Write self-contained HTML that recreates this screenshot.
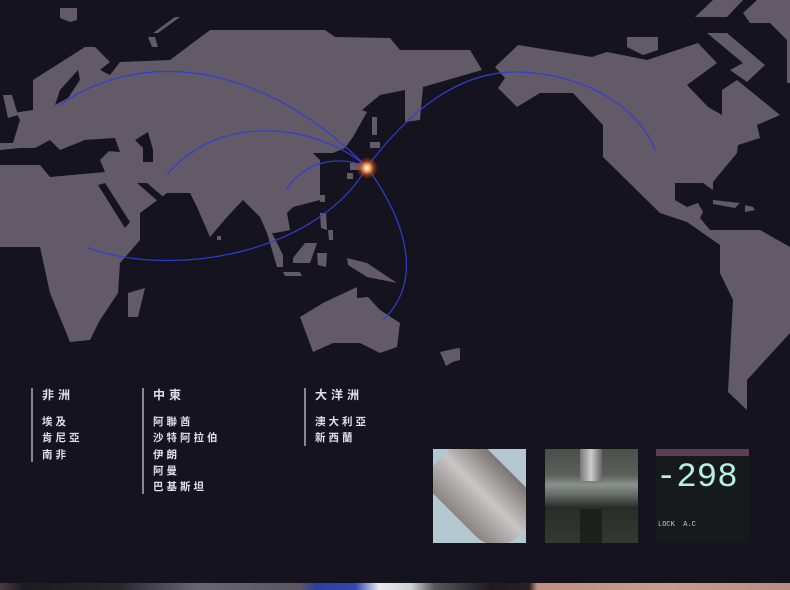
<!DOCTYPE html>
<html><head><meta charset="utf-8"><style>
html,body{margin:0;padding:0}
body{width:790px;height:590px;background:#15131e;position:relative;overflow:hidden;font-family:"Liberation Sans","Noto Sans CJK TC",sans-serif}
svg{position:absolute;left:0;top:0}
.col{position:absolute;border-left:2px solid #8a8590;padding-left:9px;color:#e2e0e6;font-size:10.5px;letter-spacing:3px;font-weight:bold}
.col h3{margin:0 0 12px;font-size:12px;font-weight:bold;line-height:14px;letter-spacing:4px}
.col div{line-height:16.3px}
.ph{position:absolute;top:449px;width:93px;height:94px;overflow:hidden}
</style></head><body>
<svg width="790" height="590" viewBox="0 0 790 590">
<g fill="#625a67">
<polygon points="0,115 33,110 33,80 85,47 95,47 110,62 100,70 110,75 120,62 170,60 210,30 325,30 335,37 390,38 400,50 470,50 482,70 430,85 423,87 420,120 405,122 405,90 380,95 362,110 367,112 353,137 345,148 333,153 313,153 320,160 320,200 293,207 287,213 290,230 275,233 267,233 260,217 243,200 227,217 210,237 197,207 190,193 167,193 140,213 140,240 120,263 118,293 100,320 90,340 70,342 50,293 40,247 0,247"/>
<polygon points="60,8 77,8 77,20 70,22 60,18"/>
<polygon points="153,33 175,17 180,17 158,33"/>
<polygon points="148,37 155,37 158,47 152,47"/>
<polygon points="372,117 377,117 377,135 372,135"/>
<polygon points="370,142 380,142 380,148 370,148"/>
<polygon points="350,163 362,163 362,170 350,170"/>
<polygon points="347,173 353,173 353,179 347,179"/>
<polygon points="320,195 325,195 325,202 320,202"/>
<polygon points="320,213 326,213 327,230 321,228"/>
<polygon points="328,230 333,230 333,240 329,240"/>
<polygon points="293,258 305,243 317,243 310,263 293,263"/>
<polygon points="317,253 327,253 326,267 318,265"/>
<polygon points="267,233 272,233 283,255 283,267 277,267"/>
<polygon points="283,272 300,272 302,276 285,276"/>
<polygon points="347,258 367,263 397,283 367,277 348,265"/>
<polygon points="300,317 323,303 357,287 357,298 368,297 380,310 400,323 397,347 380,353 360,343 333,343 313,352"/>
<polygon points="128,293 145,288 138,317 128,317"/>
<polygon points="217,236 221,236 221,240 217,240"/>
<polygon points="452,350 460,348 460,360 452,362"/>
<polygon points="440,352 458,348 456,360 446,366"/>
<polygon points="495,67 518,45 592,57 607,52 647,60 698,43 717,63 687,85 708,107 722,115 722,90 737,80 780,115 757,125 760,138 738,145 737,153 713,182 713,190 703,183 675,183 675,200 687,207 698,203 703,212 700,218 710,230 760,230 790,247 790,333 747,380 747,410 728,392 733,300 720,273 720,245 687,222 660,213 603,157 603,125 573,93 540,93 517,107 498,88 505,78"/>
<polygon points="713,200 740,203 735,208 713,204"/>
<polygon points="745,205 753,207 755,210 745,212"/>
<polygon points="695,17 713,0 743,0 727,17"/>
<polygon points="743,13 757,0 790,0 790,83 787,83 787,40 770,23 750,23"/>
<polygon points="707,33 727,33 765,65 747,82 730,70 743,63"/>
<polygon points="627,37 658,37 658,50 643,55 627,47"/>
</g>
<g fill="#15131e">
<polygon points="0,150 20,148 35,148 50,140 60,150 85,140 110,150 100,160 105,172 50,177 40,165 20,165 0,165"/>
<polygon points="83,140 115,138 120,152 95,150"/>
<polygon points="98,185 105,183 130,222 125,228"/>
<polygon points="137,183 147,183 167,200 160,203"/>
<polygon points="135,140 148,132 153,150 153,162 143,162 143,148"/>
<polygon points="60,90 78,70 80,80 68,98 55,105"/>
<polygon points="0,100 10,100 20,120 13,143 0,143"/>
</g>
<polygon points="3,95 12,95 18,115 8,118" fill="#625a67"/>
<g fill="none" stroke="#2e3fd6" stroke-width="1.2">
<path d="M60,105 C130,55 250,50 367,167"/>
<path d="M167,175 C220,110 320,125 367,167"/>
<path d="M286,190 C305,160 340,155 367,167"/>
<path d="M88,248 C180,280 320,250 367,167"/>
<path d="M367,167 C410,110 460,70 520,72 C590,75 640,110 655,150"/>
<path d="M367,167 C405,220 425,280 383,320"/>
</g>
<defs><radialGradient id="g"><stop offset="0" stop-color="#fff"/><stop offset=".3" stop-color="#ffb060"/><stop offset=".7" stop-color="#c04010" stop-opacity=".5"/><stop offset="1" stop-color="#c04010" stop-opacity="0"/></radialGradient></defs>
<circle cx="367" cy="168" r="11" fill="url(#g)"/>
</svg>
<div class="col" style="left:31px;top:388px;height:74px"><h3>非洲</h3><div>埃及</div><div>肯尼亞</div><div>南非</div></div>
<div class="col" style="left:142px;top:388px;height:106px"><h3>中東</h3><div>阿聯酋</div><div>沙特阿拉伯</div><div>伊朗</div><div>阿曼</div><div>巴基斯坦</div></div>
<div class="col" style="left:304px;top:388px;height:58px"><h3>大洋洲</h3><div>澳大利亞</div><div>新西蘭</div></div>
<div class="ph" style="left:433px;background:#b4c8d2">
<div style="position:absolute;width:70px;height:110px;background:linear-gradient(90deg,#8a8480,#c8c6c4,#7a7472);transform:rotate(-45deg);transform-origin:35px 55px;left:15px;top:-10px;border-radius:0 0 30px 30px"></div></div>
<div class="ph" style="left:545px;background:linear-gradient(180deg,#4c4e48 0%,#5d605a 28%,#8a908c 38%,#606660 50%,#2a2c28 62%,#343832 100%)"><div style="position:absolute;left:35px;top:0;width:22px;height:32px;background:linear-gradient(90deg,#777,#ccc,#666)"></div><div style="position:absolute;left:35px;top:60px;width:22px;height:34px;background:#1e201c"></div></div>
<div class="ph" style="left:656px;background:#161a1a;color:#b8f0e0;font-family:'Liberation Mono',monospace;font-size:34px"><div style="position:absolute;left:0;top:0;width:93px;height:7px;background:#5a4050"></div><div style="position:absolute;left:0;top:10px;letter-spacing:0">-298</div><div style="position:absolute;left:2px;top:72px;font-size:7px;color:#ccc">LOCK &nbsp;A.C</div></div>
<div style="position:absolute;left:0;top:583px;width:790px;height:7px;background:linear-gradient(90deg,#4a3a40 0%,#1e1a22 3%,#2a2630 15%,#6a6470 25%,#5a5660 38%,#2a40a0 40%,#3048b0 45%,#e8e8ee 48%,#d0d0d8 52%,#5a5660 55%,#201a20 62%,#2a2024 67%,#c09080 68%,#c89c8c 85%,#b88e80 100%)"></div>
</body></html>
